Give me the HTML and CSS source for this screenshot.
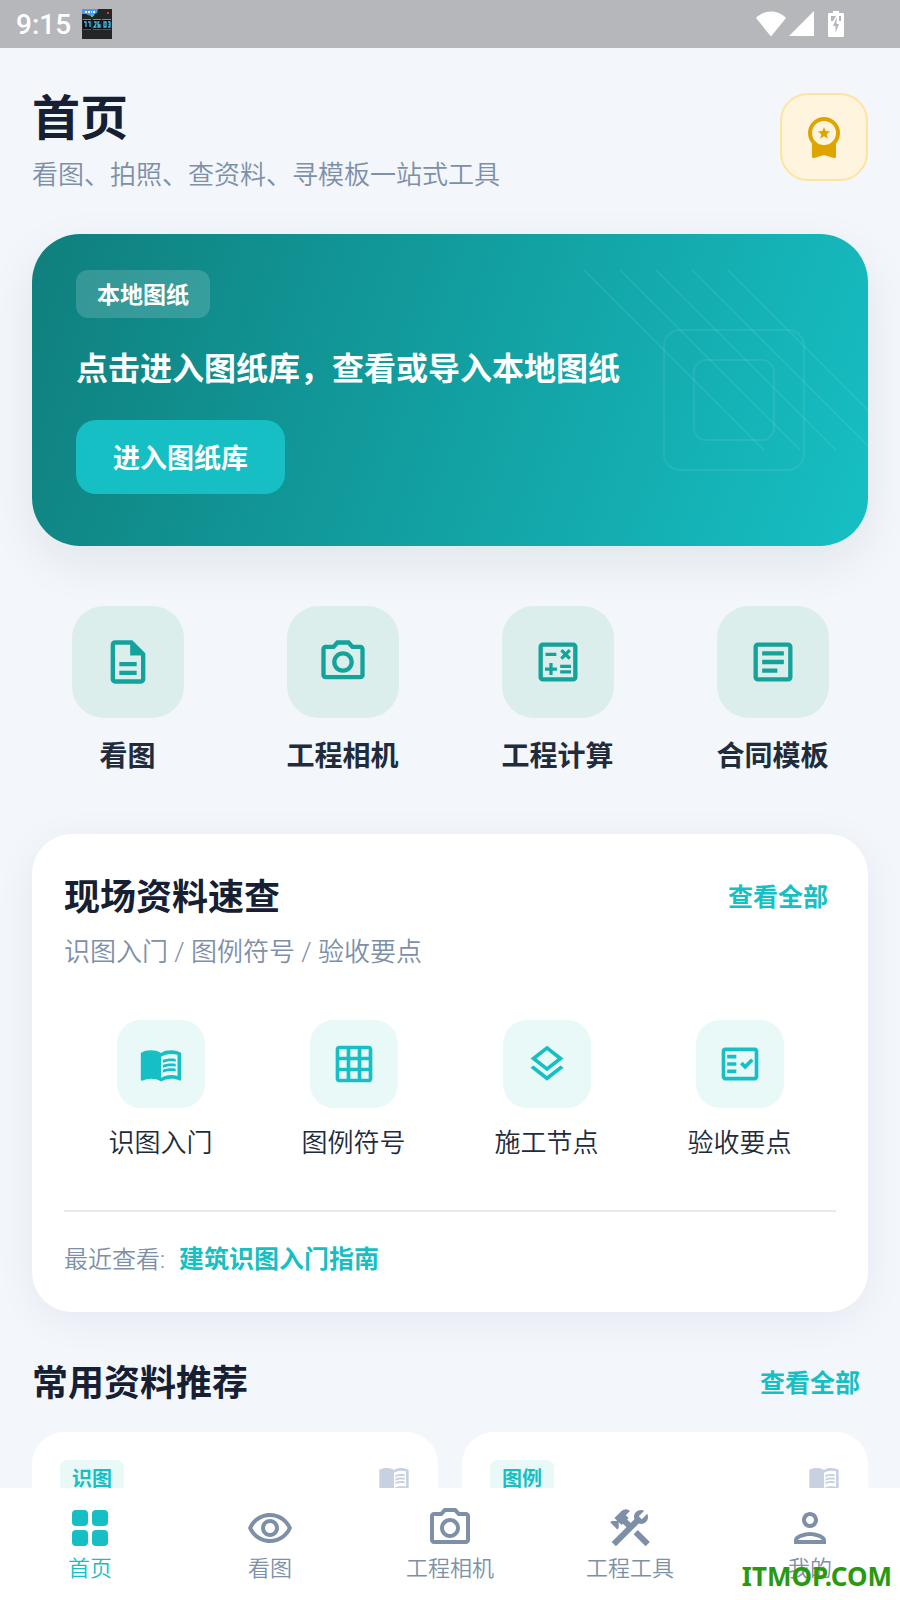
FILE: index.html
```html
<!DOCTYPE html>
<html lang="zh-CN">
<head>
    <meta charset="UTF-8">
    <meta name="viewport" content="width=device-width, initial-scale=1.0">
    <title>首页</title>
    <link rel="stylesheet" href="styles.css">
</head>
<body>
    <!-- Shared icons -->
    <svg class="sprite" aria-hidden="true">
        <symbol id="icon-camera" viewBox="0 0 24 24">
            <path d="M14.12 4l1.83 2H20v12H4V6h4.05l1.83-2h4.24M15 2H9L7.17 4H4c-1.1 0-2 .9-2 2v12c0 1.1.9 2 2 2h16c1.1 0 2-.9 2-2V6c0-1.1-.9-2-2-2h-3.17L15 2zm-3 7c1.65 0 3 1.35 3 3s-1.35 3-3 3-3-1.35-3-3 1.35-3 3-3m0-2c-2.76 0-5 2.24-5 5s2.24 5 5 5 5-2.24 5-5-2.24-5-5-5z"/>
        </symbol>
        <symbol id="icon-book" viewBox="0 0 24 24">
            <path d="M21 5c-1.11-.35-2.33-.5-3.5-.5-1.95 0-4.05.4-5.5 1.5-1.45-1.1-3.55-1.5-5.5-1.5S2.45 4.9 1 6v14.65c0 .25.25.5.5.5.1 0 .15-.05.25-.05C3.1 20.45 5.05 20 6.5 20c1.95 0 4.05.4 5.5 1.5 1.35-.85 3.8-1.5 5.5-1.5 1.65 0 3.35.3 4.75 1.05.1.05.15.05.25.05.25 0 .5-.25.5-.5V6c-.6-.45-1.25-.75-2-1zm0 13.5c-1.1-.35-2.3-.5-3.5-.5-1.7 0-4.15.65-5.5 1.5V8c1.35-.85 3.8-1.5 5.5-1.5 1.2 0 2.4.15 3.5.5v11.5z"/>
            <path d="M17.5 10.5c.88 0 1.73.09 2.5.26V9.24c-.79-.15-1.64-.24-2.5-.24-1.7 0-3.24.29-4.5.83v1.66c1.13-.64 2.7-.99 4.5-.99zM13 12.49v1.66c1.13-.64 2.7-.99 4.5-.99.88 0 1.73.09 2.5.26V11.9c-.79-.15-1.64-.24-2.5-.24-1.7 0-3.24.3-4.5.83zM17.5 14.33c-1.7 0-3.24.29-4.5.83v1.66c1.13-.64 2.7-.99 4.5-.99.88 0 1.73.09 2.5.26v-1.52c-.79-.16-1.64-.24-2.5-.24z"/>
        </symbol>
    </svg>

    <div class="status-bar">
        <span class="time">9:15</span>
        <svg class="app-icon" viewBox="0 0 30 30">
            <rect width="30" height="30" fill="#242527"/>
            <path d="M0 0h16l-1 4-2 1-2 2H9L6 6 4 5H0z" fill="#4b9bea"/>
            <path d="M3 2h2v2H3zM6 2h2v2H6zM9 2h1v2H9zM11 2h2v2h-2z" fill="#e8f3ff"/>
            <path d="M9 6h3v1h-1v1H9z" fill="#42d07c"/>
            <rect x="25" y="3" width="2" height="2" fill="#e33a2e"/>
            <path d="M1 10h8v1H1zM11 10h8v1h-8zM20 10h9v1h-9z" fill="#85888b"/>
            <path d="M1 11h8v9H1zM11 11h8v9h-8zM20 11h9v9h-9z" fill="#101114"/>
            <path d="M1 20h8v1H1zM11 20h8v1h-8zM20 20h9v1h-9z" fill="#55585b"/>
            <path d="M2 13h2v5M6 13h2v5M12 13h2v2l-2 3h2.500M17.500 13h-1.500v5h2v-2h-2M22 13h2v5h-2zM26 13h2v5h-2M26.500 15.500h1.500" fill="none" stroke="#45bfe8" stroke-width="1.300"/>
        </svg>
        <div class="status-icons">
            <svg class="wifi" viewBox="0 0 30 26"><path d="M15 25.500L0 7c4-4 9-6.500 15-6.500S26 3 30 7z"/></svg>
            <svg class="signal" viewBox="0 0 26 26"><path d="M25 0v25H0z"/></svg>
            <svg class="battery" viewBox="0 0 16 26"><path fill-rule="evenodd" d="M5 0h6v2h3.500c1 0 1.500.5 1.500 1.500v21c0 1-.5 1.500-1.500 1.500h-13C.5 26 0 25.500 0 24.500v-21C0 2.500.5 2 1.500 2H5zM3 5v5h2l3-5zM9 6l-4 9h2.500v7L11 13H8.500zM11 5v5h2V5z"/></svg>
        </div>
    </div>

    <main class="content">
        <header class="page-header">
            <div class="page-title">
                <h1>首页</h1>
                <p class="subtitle">看图、拍照、查资料、寻模板一站式工具</p>
            </div>
            <button class="vip-btn" type="button" aria-label="VIP">
                <svg viewBox="0 0 48 48">
                    <path d="M12 29v14.500c0 1.300.8 1.800 2 1.500l10-3 10 3c1.200.3 2-.2 2-1.500V29z" fill="#e0a400"/>
                    <circle cx="24" cy="20" r="14" fill="#fff5de" stroke="#e0a400" stroke-width="4"/>
                    <path d="M24 14l1.700 4.100 4.400.3-3.400 2.800 1.100 4.500-3.800-2.400-3.800 2.400 1.100-4.500-3.400-2.800 4.400-.3z" fill="#e0a400"/>
                </svg>
            </button>
        </header>

        <section class="hero">
            <svg class="hero-lines" viewBox="0 0 284 202">
                <path d="M0 0l180 180M36 0l180 180M72 0l180 180M108 0l180 180M144 0l180 180"/>
                <rect x="80" y="60" width="140" height="140" rx="16"/>
                <rect x="110" y="90" width="80" height="80" rx="12"/>
            </svg>
            <span class="hero-badge">本地图纸</span>
            <h2>点击进入图纸库，查看或导入本地图纸</h2>
            <button class="hero-btn" type="button">进入图纸库</button>
        </section>

        <nav class="quick">
            <a href="#">
                <span class="quick-icon"><svg viewBox="0 0 24 24"><path d="M8 16h8v2H8zm0-4h8v2H8zm6-10H6c-1.100 0-2 .9-2 2v16c0 1.100.89 2 1.990 2H18c1.100 0 2-.9 2-2V8l-6-6zm4 18H6V4h7v5h5v11z"/></svg></span>
                看图
            </a>
            <a href="#">
                <span class="quick-icon"><svg><use href="#icon-camera"/></svg></span>
                工程相机
            </a>
            <a href="#">
                <span class="quick-icon"><svg viewBox="0 0 24 24"><path d="M19 3H5c-1.100 0-2 .9-2 2v14c0 1.100.9 2 2 2h14c1.100 0 2-.9 2-2V5c0-1.100-.9-2-2-2zm0 16H5V5h14v14z"/><path d="M6.250 7.720h5v1.500h-5zM13 15.750h5v1.500h-5zM13 13.250h5v1.500h-5zM8 18h1.500v-2h2v-1.500h-2v-2H8v2H6V16h2zM14.090 10.950l1.410-1.410 1.410 1.410 1.060-1.060-1.410-1.410 1.410-1.410-1.060-1.060-1.410 1.410-1.410-1.410-1.060 1.060 1.410 1.410-1.410 1.410z"/></svg></span>
                工程计算
            </a>
            <a href="#">
                <span class="quick-icon"><svg viewBox="0 0 24 24"><path d="M19 5v14H5V5h14m0-2H5c-1.100 0-2 .9-2 2v14c0 1.100.9 2 2 2h14c1.100 0 2-.9 2-2V5c0-1.100-.9-2-2-2z"/><path d="M14 17H7v-2h7v2zm3-4H7v-2h10v2zm0-4H7V7h10v2z"/></svg></span>
                合同模板
            </a>
        </nav>

        <section class="panel">
            <div class="section-head">
                <h2>现场资料速查</h2>
                <a class="more" href="#">查看全部</a>
            </div>
            <p class="subtitle">识图入门 / 图例符号 / 验收要点</p>
            <div class="topics">
                <a href="#">
                    <span class="topic-icon"><svg><use href="#icon-book"/></svg></span>
                    识图入门
                </a>
                <a href="#">
                    <span class="topic-icon"><svg viewBox="0 0 24 24"><path d="M20 2H4c-1.100 0-2 .9-2 2v16c0 1.100.9 2 2 2h16c1.100 0 2-.9 2-2V4c0-1.100-.9-2-2-2zM8 20H4v-4h4v4zm0-6H4v-4h4v4zm0-6H4V4h4v4zm6 12h-4v-4h4v4zm0-6h-4v-4h4v4zm0-6h-4V4h4v4zm6 12h-4v-4h4v4zm0-6h-4v-4h4v4zm0-6h-4V4h4v4z"/></svg></span>
                    图例符号
                </a>
                <a href="#">
                    <span class="topic-icon"><svg viewBox="0 0 24 24"><path d="M11.990 18.540l-7.370-5.730L3 14.070l9 7 9-7-1.630-1.270-7.380 5.740zM12 16l7.360-5.730L21 9l-9-7-9 7 1.630 1.270L12 16zm0-11.470L17.740 9 12 13.470 6.260 9 12 4.530z"/></svg></span>
                    施工节点
                </a>
                <a href="#">
                    <span class="topic-icon"><svg viewBox="0 0 24 24"><path d="M20 3H4c-1.100 0-2 .9-2 2v14c0 1.100.9 2 2 2h16c1.100 0 2-.9 2-2V5c0-1.100-.9-2-2-2zm0 16H4V5h16v14z"/><path d="M19.410 10.420L17.990 9l-3.170 3.170-1.410-1.420L12 12.160 14.820 15zM5 7h5v2H5zM5 11h5v2H5zM5 15h5v2H5z"/></svg></span>
                    验收要点
                </a>
            </div>
            <div class="recent">
                <span>最近查看:</span>
                <a href="#">建筑识图入门指南</a>
            </div>
        </section>

        <section class="recommend">
            <div class="section-head">
                <h2>常用资料推荐</h2>
                <a class="more" href="#">查看全部</a>
            </div>
            <div class="cards">
                <article class="card">
                    <span class="tag">识图</span>
                    <svg><use href="#icon-book"/></svg>
                </article>
                <article class="card">
                    <span class="tag">图例</span>
                    <svg><use href="#icon-book"/></svg>
                </article>
            </div>
        </section>
    </main>

    <nav class="tab-bar">
        <a class="active" href="#">
            <svg viewBox="0 0 24 24"><rect x="3" y="3" width="8" height="8" rx="2"/><rect x="13" y="3" width="8" height="8" rx="2"/><rect x="3" y="13" width="8" height="8" rx="2"/><rect x="13" y="13" width="8" height="8" rx="2"/></svg>
            首页
        </a>
        <a href="#">
            <svg viewBox="0 0 24 24"><path d="M12 6.500c3.790 0 7.170 2.130 8.820 5.500-1.650 3.370-5.030 5.500-8.820 5.500s-7.170-2.130-8.820-5.500C4.830 8.630 8.210 6.500 12 6.500m0-2C7 4.500 2.730 7.610 1 12c1.730 4.390 6 7.500 11 7.500s9.270-3.110 11-7.500c-1.730-4.390-6-7.500-11-7.500zm0 5c1.380 0 2.500 1.120 2.500 2.500s-1.120 2.500-2.500 2.500-2.500-1.120-2.500-2.500 1.120-2.500 2.500-2.500m0-2c-2.480 0-4.500 2.020-4.500 4.500s2.020 4.500 4.500 4.500 4.500-2.020 4.500-4.500-2.020-4.500-4.500-4.500z"/></svg>
            看图
        </a>
        <a href="#">
            <svg><use href="#icon-camera"/></svg>
            工程相机
        </a>
        <a href="#">
            <svg viewBox="0 0 24 24"><path d="M13.783 15.172l2.121-2.121 5.996 5.996-2.121 2.121z"/><path d="M17.500 10c1.930 0 3.500-1.570 3.500-3.500 0-.58-.16-1.120-.41-1.600l-2.700 2.700-1.490-1.490 2.700-2.700c-.48-.25-1.020-.41-1.600-.41C15.570 3 14 4.570 14 6.500c0 .41.080.8.210 1.160l-1.850 1.850-1.780-1.780.71-.71-1.410-1.410L12 3.490a3 3 0 0 0-4.240 0L4.220 7.030l1.410 1.410H2.810l-.71.71 3.540 3.540.71-.71V9.150l1.410 1.410.71-.71 1.780 1.780-7.410 7.410 2.120 2.120L16.340 9.790c.36.130.75.210 1.160.210z"/></svg>
            工程工具
        </a>
        <a href="#">
            <svg viewBox="0 0 24 24"><path d="M12 6c1.100 0 2 .9 2 2s-.9 2-2 2-2-.9-2-2 .9-2 2-2m0 10c2.700 0 5.800 1.290 6 2H6c.23-.72 3.310-2 6-2m0-12C9.790 4 8 5.790 8 8s1.790 4 4 4 4-1.790 4-4-1.790-4-4-4zm0 10c-2.670 0-8 1.340-8 4v2h16v-2c0-2.660-5.330-4-8-4z"/></svg>
            我的
        </a>
        <span class="watermark">ITMOP.COM</span>
    </nav>
</body>
</html>
```

FILE: styles.css
```css
* {
    margin: 0;
    padding: 0;
    box-sizing: border-box;
}

body {
    display: flex;
    flex-direction: column;
    height: 100vh;
    background-color: #f3f6fb;
    color: #172033;
    font-family: Roboto, "Noto Sans CJK SC", sans-serif;
    font-weight: 350;
    overflow: hidden;
}

a {
    color: inherit;
    text-decoration: none;
}

button {
    border: none;
    font-family: inherit;
    cursor: pointer;
}

svg {
    display: block;
    fill: currentColor;
}

.sprite {
    position: absolute;
    width: 0;
    height: 0;
}

/* Status bar */
.status-bar {
    display: flex;
    flex-shrink: 0;
    align-items: center;
    gap: 11px;
    height: 48px;
    padding: 0 56px 0 16px;
    background-color: #b6b7bb;
    color: #ffffff;
}

.time {
    font-size: 28px;
    font-weight: 500;
}

.app-icon {
    width: 30px;
    height: 30px;
}

.status-icons {
    display: flex;
    align-items: center;
    gap: 3px;
    margin-left: auto;
}

.wifi {
    width: 30px;
    height: 26px;
}

.signal {
    width: 26px;
    height: 26px;
}

.battery {
    width: 16px;
    height: 26px;
    margin-left: 10px;
}

/* Main */
.content {
    flex: 1;
    min-height: 0;
    padding: 33px 32px 0;
    overflow-x: hidden;
    overflow-y: auto;
    scrollbar-width: none;
}

.page-header {
    display: flex;
    align-items: center;
    justify-content: space-between;
    margin-bottom: 41px;
}

.page-title {
    padding-top: 6px;
}

h1 {
    margin-bottom: 6px;
    font-size: 48px;
    line-height: 64px;
}

.subtitle {
    color: #7e8fa8;
    font-size: 26px;
    line-height: 36px;
}

.vip-btn {
    display: flex;
    align-items: center;
    justify-content: center;
    width: 88px;
    height: 88px;
    border: 2px solid #ffe3a0;
    border-radius: 28px;
    background-color: #fff5de;
}

.vip-btn svg {
    width: 48px;
    height: 48px;
}

/* Hero */
.hero {
    position: relative;
    display: flex;
    flex-direction: column;
    align-items: flex-start;
    padding: 36px 44px 52px;
    border-radius: 48px;
    background: linear-gradient(110deg, #0f7f7d, #16bfc4);
    box-shadow: 0 16px 48px rgba(15, 50, 50, 0.08);
    color: #ffffff;
}

.hero-lines {
    position: absolute;
    top: 36px;
    right: 0;
    width: 284px;
    height: 202px;
    overflow: visible;
    fill: none;
    stroke: rgba(255, 255, 255, 0.07);
    stroke-width: 2;
}

.hero-badge {
    padding: 4px 21px 0;
    border-radius: 12px;
    background-color: rgba(255, 255, 255, 0.16);
    font-size: 23px;
    font-weight: bold;
    line-height: 44px;
}

.hero h2 {
    margin: 28px 0;
    font-size: 32px;
    line-height: 46px;
}

.hero-btn {
    padding: 4px 37px 0;
    border-radius: 20px;
    background-color: #16bfc4;
    color: #ffffff;
    font-size: 27px;
    font-weight: bold;
    line-height: 70px;
}

/* Quick entries */
.quick {
    display: grid;
    grid-template-columns: repeat(4, 1fr);
    gap: 24px;
    margin-top: 60px;
}

.quick a {
    display: flex;
    flex-direction: column;
    align-items: center;
    gap: 19px;
    color: #202b3c;
    font-size: 28px;
    font-weight: bold;
    line-height: 40px;
}

.quick-icon {
    display: flex;
    align-items: center;
    justify-content: center;
    width: 112px;
    height: 112px;
    border-radius: 32px;
    background-color: #dceeec;
    color: #14a39b;
}

.quick-icon svg {
    width: 52px;
    height: 52px;
}

/* Panel */
.panel {
    margin-top: 57px;
    padding: 36px 32px 32px;
    border-radius: 40px;
    background-color: #ffffff;
    box-shadow: 0 8px 40px rgba(20, 40, 60, 0.06);
}

.section-head {
    display: flex;
    align-items: center;
    justify-content: space-between;
}

.section-head h2 {
    font-size: 36px;
    line-height: 56px;
}

.more {
    padding: 0 8px 6px;
    color: #16bfc4;
    font-size: 25px;
    font-weight: bold;
}

.panel .subtitle {
    margin-top: 8px;
}

.topics {
    display: grid;
    grid-template-columns: repeat(4, 1fr);
    margin-top: 50px;
    padding-bottom: 49px;
    border-bottom: 2px solid #e5ebeb;
}

.topics a {
    display: flex;
    flex-direction: column;
    align-items: center;
    gap: 17px;
    color: #202b3c;
    font-size: 26px;
    line-height: 36px;
}

.topic-icon {
    display: flex;
    align-items: center;
    justify-content: center;
    width: 88px;
    height: 88px;
    border-radius: 24px;
    background-color: #e8f9f8;
    color: #16bfc4;
}

.topic-icon svg {
    width: 44px;
    height: 44px;
}

.recent {
    display: flex;
    align-items: center;
    gap: 14px;
    margin-top: 28px;
    color: #7e8fa8;
    font-size: 24px;
    line-height: 40px;
}

.recent a {
    color: #16bfc4;
    font-size: 25px;
    font-weight: bold;
}

/* Recommended */
.recommend {
    margin-top: 44px;
}

.cards {
    display: grid;
    grid-template-columns: repeat(2, 1fr);
    gap: 24px;
    margin-top: 20px;
}

.card {
    display: flex;
    align-items: flex-start;
    justify-content: space-between;
    min-height: 200px;
    padding: 28px;
    border-radius: 32px;
    background-color: #ffffff;
}

.card svg {
    width: 32px;
    height: 36px;
    color: #c8d1e1;
}

.tag {
    padding: 0 12px;
    border-radius: 8px;
    background-color: #e8f9f8;
    color: #16bfc4;
    font-size: 20px;
    font-weight: bold;
    line-height: 38px;
}

/* Tab bar */
.tab-bar {
    position: relative;
    display: grid;
    flex-shrink: 0;
    grid-template-columns: repeat(5, 1fr);
    padding: 16px 0 14px;
    background-color: #ffffff;
    color: #7e8fa8;
}

.tab-bar a {
    display: flex;
    flex-direction: column;
    align-items: center;
    font-size: 22px;
    line-height: 34px;
}

.tab-bar .active {
    color: #16bfc4;
}

.tab-bar svg {
    width: 48px;
    height: 48px;
}

.watermark {
    position: absolute;
    right: 8px;
    bottom: 6px;
    color: #29990f;
    font-family: "Noto Sans", sans-serif;
    font-size: 26px;
    font-weight: bold;
}
```
